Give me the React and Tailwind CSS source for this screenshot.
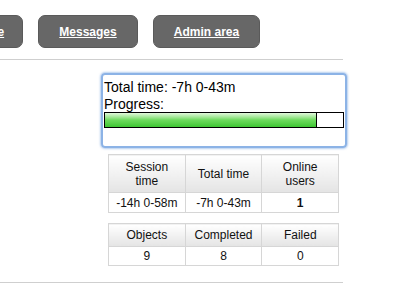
import React from 'react';

const navItems = ['Home', 'Messages', 'Admin area'];

function StatTable({ headers, values, headH, rowH, className = '' }) {
  return (
    <table className={`border-collapse w-[231px] text-[12px] leading-[14px] text-[#111] ${className}`}>
      <tbody>
        <tr>
          {headers.map((h, i) => (
            <th
              key={i}
              className={`${headH} w-[77px] border border-[#d6d6d6] font-normal text-center align-middle bg-linear-to-b from-white to-[#e4e4e4]`}
            >
              {h}
            </th>
          ))}
        </tr>
        <tr>
          {values.map((v, i) => (
            <td
              key={i}
              className={`${rowH} border border-[#d6d6d6] text-center align-middle ${v.bold ? 'font-bold' : ''}`}
            >
              {v.text}
            </td>
          ))}
        </tr>
      </tbody>
    </table>
  );
}

export default function App() {
  return (
    <div className="w-[395px] h-[291px] bg-white overflow-hidden font-['Liberation_Sans',Arial,sans-serif]">
      {/* Top navigation */}
      <nav className="flex gap-[15px] pt-[15px] ml-[-48px]">
        {navItems.map((item, i) => (
          <a
            key={item}
            href="#"
            className={`h-[33px] ${i === 0 ? 'w-[71px]' : i === 1 ? 'w-[100px]' : 'w-[107px]'} flex items-center justify-center rounded-[7px] bg-[#676767] border border-[#5a5a5a] text-white font-bold text-[12px] underline`}
          >
            {item}
          </a>
        ))}
      </nav>

      <div className="mt-[11px] w-[343px] h-px bg-[#cfcfcf]" />

      <div className="flex">
        <div className="w-[101px] shrink-0" />
        <div className="w-[246px] pt-[13px]">
          {/* Progress box */}
          <div className="h-[75px] border-2 border-[#8cb3e6] rounded-[4px] shadow-[0_0_2px_1px_rgba(120,165,225,0.55)] px-px pt-[4px] text-[14px] leading-[16px] text-black">
            <div>Total time: -7h 0-43m</div>
            <div className="mt-px">Progress:</div>
            <div className="h-[16px] w-[240px] border border-black flex bg-white">
              <div className="w-[89%] h-full border-r border-black bg-linear-to-b from-[#e2f8dc] via-[#6ddb5d] to-[#3cc632]" />
            </div>
          </div>

          <StatTable
            className="ml-[7px] mt-[6px]"
            headH="h-[38px]"
            rowH="h-[20px]"
            headers={[
              <>Session<br />time</>,
              'Total time',
              <>Online<br />users</>,
            ]}
            values={[
              { text: '-14h 0-58m' },
              { text: '-7h 0-43m' },
              { text: '1', bold: true },
            ]}
          />

          <StatTable
            className="ml-[7px] mt-[10px]"
            headH="h-[23px]"
            rowH="h-[19px]"
            headers={['Objects', 'Completed', 'Failed']}
            values={[{ text: '9' }, { text: '8' }, { text: '0' }]}
          />
        </div>
      </div>

      <div className="mt-[16px] w-[343px] h-px bg-[#cfcfcf]" />
    </div>
  );
}
